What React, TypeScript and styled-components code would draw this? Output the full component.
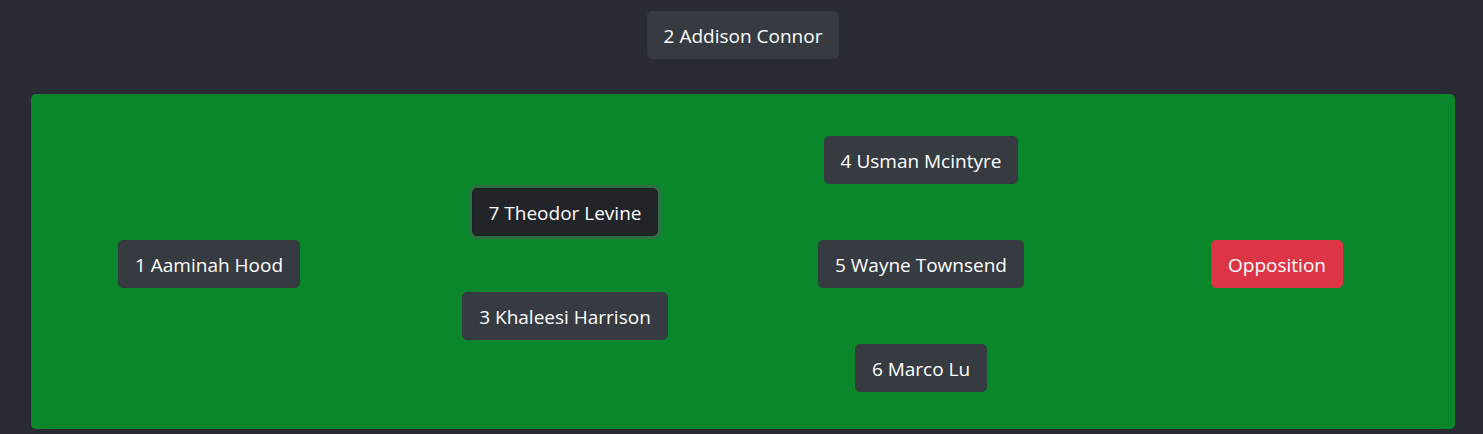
import React from "react";
import styled, { createGlobalStyle } from "styled-components";

const Global = createGlobalStyle`
  html, body { margin: 0; padding: 0; background: #282b33; }
  body { font-family: "Open Sans", "Noto Sans", sans-serif; color: #fff; }
`;

const Page = styled.div`
  padding: 11px 28px 0 31px;
`;

const Bench = styled.div`
  display: flex;
  justify-content: center;
  margin-bottom: 35px;
`;

const Field = styled.div`
  background: #0a862b;
  border-radius: 5px;
  height: 335px;
  box-sizing: border-box;
  padding: 42px 0 37px;
  display: grid;
  grid-template-columns: repeat(4, 1fr);
`;

const Column = styled.div`
  display: flex;
  flex-direction: column;
  align-items: center;
  justify-content: center;
  gap: 56px;
`;

const Player = styled.button<{ $variant?: "dark" | "active" | "danger" }>`
  font-family: inherit;
  font-size: 19px;
  line-height: 30px;
  padding: 9px 16px 7px;
  border-radius: 5px;
  color: #fff;
  cursor: pointer;
  border: 1px solid
    ${(p) => (p.$variant === "danger" ? "#dc3545" : p.$variant === "active" ? "#1d2124" : "#343a40")};
  background: ${(p) =>
    p.$variant === "danger" ? "#dc3545" : p.$variant === "active" ? "#212429" : "#363a41"};
  box-shadow: ${(p) => (p.$variant === "active" ? "0 0 0 3px rgba(82, 88, 93, 0.5)" : "none")};
  white-space: nowrap;
`;

const columns: { label: string; variant?: "dark" | "active" | "danger" }[][] = [
  [{ label: "1 Aaminah Hood" }],
  [{ label: "7 Theodor Levine", variant: "active" }, { label: "3 Khaleesi Harrison" }],
  [{ label: "4 Usman Mcintyre" }, { label: "5 Wayne Townsend" }, { label: "6 Marco Lu" }],
  [{ label: "Opposition", variant: "danger" }],
];

export default function App() {
  return (
    <>
      <Global />
      <Page>
        <Bench>
          <Player>2 Addison Connor</Player>
        </Bench>
        <Field>
          {columns.map((col, i) => (
            <Column key={i}>
              {col.map((p) => (
                <Player key={p.label} $variant={p.variant}>
                  {p.label}
                </Player>
              ))}
            </Column>
          ))}
        </Field>
      </Page>
    </>
  );
}
